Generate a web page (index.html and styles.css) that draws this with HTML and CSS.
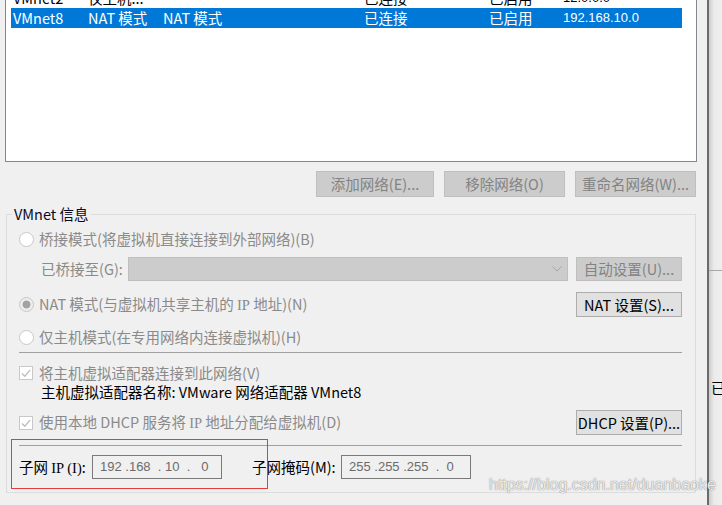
FILE: index.html
```html
<!DOCTYPE html>
<html lang="zh-CN">

<head>
  <meta charset="UTF-8" />
  <meta name="viewport" content="width=device-width, initial-scale=1.0" />
  <title>虚拟网络编辑器</title>
  <link rel="stylesheet" href="styles.css">
</head>

<body>
  <div class="screen">
    <div class="editor">
      <!-- 网络列表 -->
      <div class="net-list">
        <div class="net-rows">
          <div class="net-row">
            <span>VMnet2</span><span>仅主机...</span><span></span><span>已连接</span><span>已启用</span><span class="ip">12.0.0.0</span>
          </div>
          <div class="net-row selected">
            <span>VMnet8</span><span>NAT 模式</span><span>NAT 模式</span><span>已连接</span><span>已启用</span><span class="ip">192.168.10.0</span>
          </div>
        </div>
      </div>

      <div class="net-actions">
        <button class="btn btn-add" disabled>添加网络(E)...</button>
        <button class="btn btn-wide" disabled>移除网络(O)</button>
        <button class="btn btn-wide" disabled>重命名网络(W)...</button>
      </div>

      <!-- VMnet 信息 -->
      <fieldset class="vmnet-info">
        <legend>VMnet 信息</legend>

        <div class="opt-row row-bridge">
          <span class="radio"></span>
          <span class="muted">桥接模式(将虚拟机直接连接到外部网络)(B)</span>
        </div>

        <div class="opt-row row-bridge-to">
          <span class="muted bridge-label">已桥接至(G):</span>
          <div class="combo">
            <svg width="10" height="6" viewBox="0 0 10 6"><polyline points="0.5,0.5 5,5 9.5,0.5" fill="none" stroke="#a6a6a6" stroke-width="1" /></svg>
          </div>
          <button class="btn btn-side" disabled>自动设置(U)...</button>
        </div>

        <div class="opt-row row-nat">
          <span class="radio checked"></span>
          <span class="muted">NAT 模式(与虚拟机共享主机的 <span class="serif">IP</span> 地址)(N)</span>
          <button class="btn btn-side push">NAT 设置(S)...</button>
        </div>

        <div class="opt-row row-host">
          <span class="radio"></span>
          <span class="muted">仅主机模式(在专用网络内连接虚拟机)(H)</span>
        </div>

        <div class="sep sep-first"></div>

        <div class="opt-row row-check">
          <span class="check">
            <svg width="12" height="12" viewBox="0 0 12 12"><polyline points="2,6.5 4.8,9.2 10.2,2.8" fill="none" stroke="#bdbdbd" stroke-width="1.3" /></svg>
          </span>
          <span class="muted">将主机虚拟适配器连接到此网络(V)</span>
        </div>
        <div class="adapter-name">主机虚拟适配器名称: VMware 网络适配器 VMnet8</div>

        <div class="opt-row row-dhcp">
          <span class="check">
            <svg width="12" height="12" viewBox="0 0 12 12"><polyline points="2,6.5 4.8,9.2 10.2,2.8" fill="none" stroke="#bdbdbd" stroke-width="1.3" /></svg>
          </span>
          <span class="muted">使用本地 DHCP 服务将 <span class="serif">IP</span> 地址分配给虚拟机(D)</span>
          <button class="btn btn-side push">DHCP 设置(P)...</button>
        </div>

        <div class="sep sep-second"></div>

        <div class="opt-row row-subnet">
          <span class="subnet-label">子网 <span class="serif">IP (I)</span>:</span>
          <div class="ip-box">192 .168  . 10  .   0</div>
          <span class="mask-label">子网掩码(M):</span>
          <div class="ip-box">255 .255 .255  .  0</div>
        </div>
      </fieldset>

      <!-- 截图上的红框标注 -->
      <div class="mark-box"></div>
    </div>

    <div class="behind">
      <div class="behind-line"></div>
      <span class="behind-text">已</span>
    </div>

    <div class="watermark">https://blog.csdn.net/duanbaoke</div>
  </div>
</body>

</html>
```

FILE: styles.css
```css
* {
  box-sizing: border-box;
}

body {
  margin: 0;
  background: #f0f0f0;
  font-family: "Noto Sans CJK SC", "Noto Sans", sans-serif;
  font-size: 14.5px;
  color: #000;
}

.screen {
  position: relative;
  display: flex;
  width: 722px;
  height: 505px;
  overflow: hidden;
}

.editor {
  position: relative;
  flex: none;
  width: 709px;
  border-right: 2px solid #6b6b6b;
  background: #f0f0f0;
}

/* 列表 */
.net-list {
  margin-left: 5px;
  width: 692px;
  height: 162px;
  border: 1px solid #828790;
  border-top: none;
  background: #fff;
  overflow: hidden;
}

.net-rows {
  margin-top: -12px;
  padding-left: 5px;
}

.net-row {
  display: grid;
  grid-template-columns: 75px 75px 201px 125px 74px 1fr;
  width: 671px;
  height: 20px;
  line-height: 20px;
  padding-left: 2px;
  white-space: nowrap;
}

.net-row.selected {
  background: #0078d7;
  color: #fff;
}

.net-row .ip {
  font-family: "Liberation Sans", sans-serif;
  font-size: 13px;
}

/* 按钮 */
.btn {
  appearance: none;
  height: 25px;
  padding: 0;
  border: 1px solid #adadad;
  background: #e1e1e1;
  color: #000;
  font-family: inherit;
  font-size: 14.5px;
  line-height: 22px;
  white-space: nowrap;
}

.btn:disabled {
  background: #cccccc;
  border-color: #bfbfbf;
  color: #838383;
}

.net-actions {
  display: flex;
  justify-content: flex-end;
  gap: 10px;
  padding: 9px 11px 0 0;
}

.net-actions .btn {
  height: 26px;
}

.btn-add {
  width: 118px;
}

.btn-wide {
  width: 121px;
}

.btn-side {
  width: 106px;
  flex: none;
}

.push {
  margin-left: auto;
}

/* 分组框 */
.vmnet-info {
  margin: 9px 11px 0 6px;
  padding: 0 13px 13px 12px;
  border: 1px solid #dcdcdc;
  min-width: 0;
}

.vmnet-info legend {
  margin-left: -7px;
  padding: 0 2px;
  line-height: 16px;
  font-size: 14.5px;
  color: #0a0a1e;
}

.opt-row {
  display: flex;
  align-items: center;
  line-height: 18px;
  white-space: nowrap;
}

.muted {
  color: #8a8a8a;
}

.serif {
  font-family: "Liberation Serif", serif;
}

.radio {
  flex: none;
  width: 15px;
  height: 15px;
  margin-right: 5px;
  border: 1px solid #c8c8c8;
  border-radius: 50%;
  background: #fff;
}

.radio.checked {
  background: radial-gradient(circle, #a2a2a2 0 3.6px, #ececec 4.3px);
}

.check {
  flex: none;
  display: flex;
  align-items: center;
  justify-content: center;
  width: 14px;
  height: 14px;
  margin-right: 6px;
  border: 1px solid #c8c8c8;
  background: #fff;
}

.row-bridge {
  height: 22px;
  margin-top: 6px;
}

.row-bridge-to {
  height: 24px;
  margin-top: 7px;
}

.bridge-label {
  width: 109px;
  padding-left: 22px;
}

.combo {
  flex: none;
  display: flex;
  align-items: center;
  justify-content: flex-end;
  width: 440px;
  height: 24px;
  margin-right: 8px;
  padding-right: 5px;
  border: 1px solid #bfbfbf;
  background: #cccccc;
}

.row-bridge-to .btn {
  height: 24px;
}

.row-nat {
  height: 25px;
  margin-top: 11px;
}

.row-host {
  height: 20px;
  margin-top: 10px;
}

.sep {
  height: 1px;
  background: #a0a0a0;
}

.sep-first {
  margin-top: 5px;
}

.row-check {
  height: 20px;
  margin-top: 10px;
}

.adapter-name {
  height: 18px;
  line-height: 18px;
  padding-left: 22px;
  white-space: nowrap;
}

.row-dhcp {
  height: 25px;
  margin-top: 9px;
}

.sep-second {
  margin-top: 10px;
}

.row-subnet {
  height: 24px;
  margin-top: 9px;
}

.subnet-label {
  width: 73px;
}

.mask-label {
  width: 89px;
  margin-left: 30px;
}

.ip-box {
  flex: none;
  width: 130px;
  height: 24px;
  line-height: 22px;
  padding-left: 7px;
  border: 1px solid #7a7a7a;
  background: #f0f0f0;
  color: #6b6b6b;
  font-family: "Liberation Sans", sans-serif;
  font-size: 13px;
  white-space: pre;
}

.mark-box {
  position: absolute;
  left: 11px;
  top: 439px;
  width: 257px;
  height: 50px;
  border: 1px solid #e23c3c;
}

/* 后面的窗口 */
.behind {
  flex: 1;
  display: flex;
  flex-direction: column;
  background: linear-gradient(to right, #cdcdcd, #ebebeb 5px, #eeeeee);
  white-space: nowrap;
  overflow: hidden;
}

.behind-line {
  height: 1px;
  margin-top: 270px;
  background: #a8a8a8;
}

.behind-text {
  margin-top: 108px;
  padding-left: 2px;
  line-height: 18px;
  font-size: 14.5px;
}

.watermark {
  position: absolute;
  left: 489px;
  top: 475px;
  font-family: "Liberation Sans", sans-serif;
  font-size: 16px;
  line-height: 20px;
  color: rgba(255, 255, 255, 0.85);
  text-shadow: 0 0 1px rgba(80, 80, 80, 0.55), 0 0 1px rgba(80, 80, 80, 0.55);
  white-space: nowrap;
}
```
